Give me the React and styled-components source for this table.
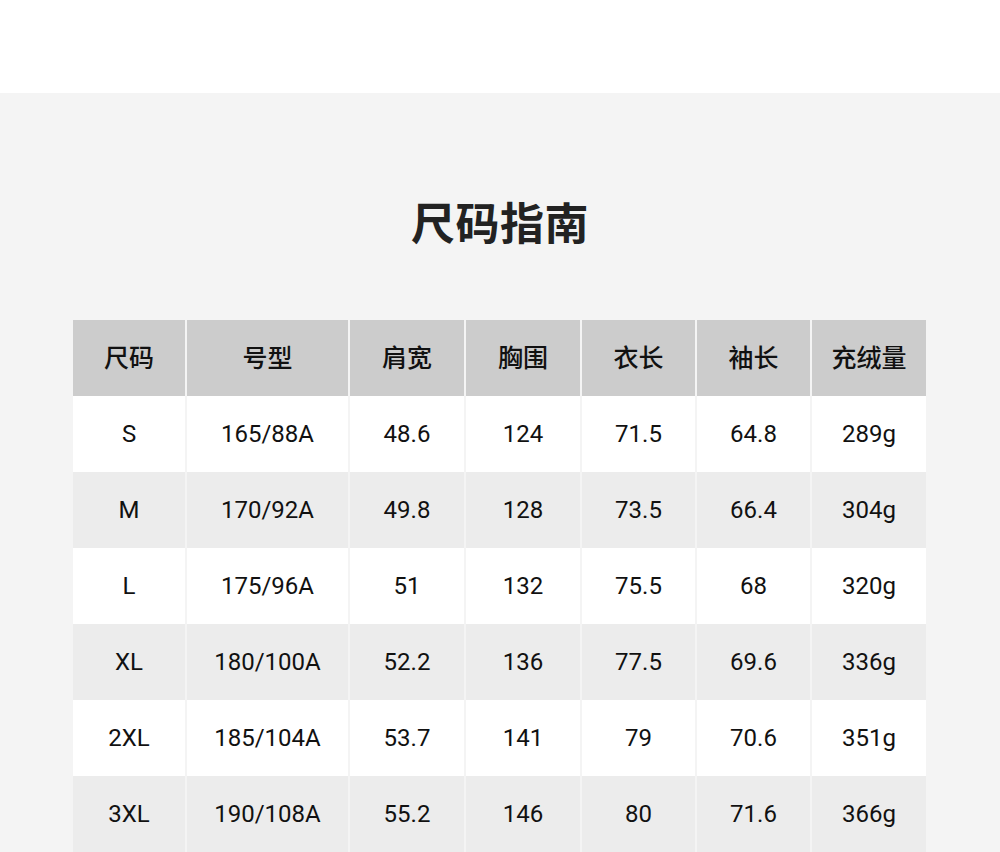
import React from "react";
import styled, { createGlobalStyle } from "styled-components";

const Global = createGlobalStyle`
  html, body { margin: 0; padding: 0; background: #ffffff; }
  body { font-family: Roboto, "Noto Sans CJK SC", sans-serif; }
`;

const TopBar = styled.div`
  height: 93px;
  background: #ffffff;
`;

const Section = styled.section`
  background: #f4f4f4;
  padding: 106px 0 0 73px;
  min-height: 759px;
  box-sizing: border-box;
`;

const Title = styled.h1`
  margin: 0 0 77px -73px;
  text-align: center;
  font-family: "Noto Sans CJK SC", sans-serif;
  font-weight: 700;
  font-size: 44px;
  line-height: 44px;
  color: #222222;
  letter-spacing: 0.5px;
`;

const Grid = styled.div`
  display: grid;
  grid-template-columns: 112px 161px 114px 114px 113px 113px 114px;
  column-gap: 2px;
  width: 853px;
`;

const Cell = styled.div`
  height: 76px;
  box-sizing: border-box;
  padding-bottom: ${(p) => (p.$head ? "4px" : "0")};
  display: flex;
  align-items: center;
  justify-content: center;
  background: ${(p) => (p.$head ? "#cccccc" : p.$alt ? "#ececec" : "#ffffff")};
  color: #111111;
  font-family: ${(p) =>
    p.$head ? '"Noto Sans CJK SC", sans-serif' : 'Roboto, "Noto Sans CJK SC", sans-serif'};
  font-weight: ${(p) => (p.$head ? 500 : 400)};
  font-size: ${(p) => (p.$head ? "25px" : "24px")};
  line-height: 1;
`;

const headers = ["尺码", "号型", "肩宽", "胸围", "衣长", "袖长", "充绒量"];
const rows = [
  ["S", "165/88A", "48.6", "124", "71.5", "64.8", "289g"],
  ["M", "170/92A", "49.8", "128", "73.5", "66.4", "304g"],
  ["L", "175/96A", "51", "132", "75.5", "68", "320g"],
  ["XL", "180/100A", "52.2", "136", "77.5", "69.6", "336g"],
  ["2XL", "185/104A", "53.7", "141", "79", "70.6", "351g"],
  ["3XL", "190/108A", "55.2", "146", "80", "71.6", "366g"],
];

export default function App() {
  return (
    <>
      <Global />
      <TopBar />
      <Section>
        <Title>尺码指南</Title>
        <Grid>
          {headers.map((h) => (
            <Cell key={h} $head>
              {h}
            </Cell>
          ))}
          {rows.map((r, i) =>
            r.map((v, j) => (
              <Cell key={`${i}-${j}`} $alt={i % 2 === 1}>
                {v}
              </Cell>
            ))
          )}
        </Grid>
      </Section>
    </>
  );
}
